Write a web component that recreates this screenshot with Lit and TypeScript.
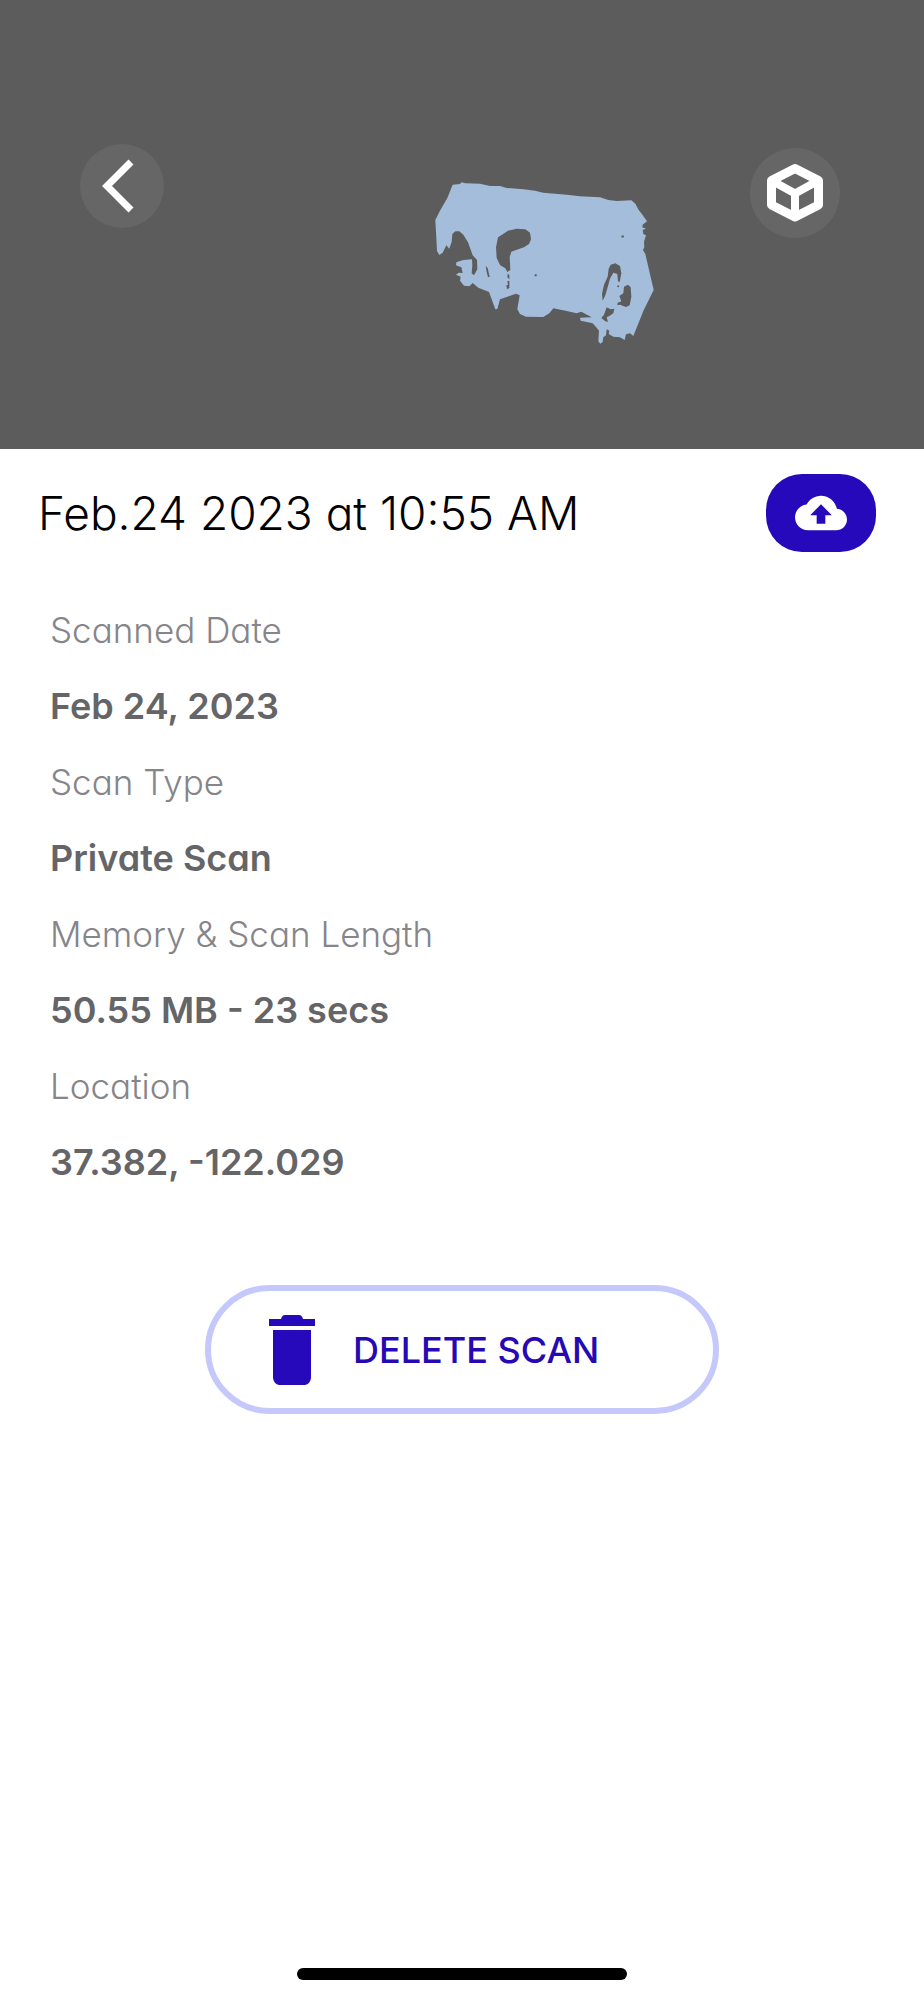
import { LitElement, html, css, svg } from "lit";
import { customElement, property } from "lit/decorators.js";

const mesh = svg`
  <path fill="#a4bddb" fill-rule="evenodd" d="M98 44L120 42L124 37L136 40L180 41L210 48L240 48L260 54L310 58L345 62L370 68L440 74L480 79L540 82L565 90L590 93L634 91L646 101L656 120L664 130L681 154L668 164L667 172L678 176L668 180L670 192L678 196L672 215L673 232L669 240L676 252L701 360L671 421L640 498L630 490L618 493L614 510L600 502L580 500L566 492L568 482L560 478L558 496L550 502L548 516L541 521L535 514L537 482L528 471L518 460L482 452L480 443L515 442L484 425L470 430L440 423L400 415L388 430L370 441L318 440L300 432L292 418L299 376L288 371L262 380L240 388L232 417L226 418L207 366L175 353L158 339L148 349L132 347L120 332L122 320L108 314L116 308L128 309L124 292L108 286L109 277L130 270L156 268L157 285L155 310L162 316L172 298L171 270L158 256L144 217L130 194L118 184H106L97 192L95 215L88 236L79 226L68 248L58 255L51 243L49 205L46 150L60 122L82 84Z
  M234 202L246 194L264 182L290 176L316 178L330 188L333 208L327 222L312 232L288 240L274 245L269 262L271 300L262 306L256 295L240 285L230 264L228 232Z
  M197 288L203 294L209 320L204 322L200 306Z
  M263 312L268 314V328L262 322ZM262 334L268 332V354L261 358L259 346L264 344Z
  M546 372L552 344L563 320L566 296L572 284L586 280L600 288L604 310L599 336L594 334L592 312L580 308L570 326L564 348L556 376L548 392Z
  M612 350L624 344L632 352L634 380L629 406L618 411L600 404L592 406L593 398L604 394L598 378L610 370Z
  M560 412L572 418L583 416L580 430L568 438L560 442L564 456L556 454L544 444L552 434Z
  M604 197L611 196L612 202L605 203ZM344 313H350V319H344ZM592 347L597 346V352L592 351Z"/>`;

@customElement("scan-field")
class ScanField extends LitElement {
  @property() label = "";
  @property() value = "";

  static styles = css`
    :host { display: block; }
    .pair { margin: 0; }
    .label, .value { margin: 0; line-height: 76px; }
    .label { font-size: 35px; font-weight: 300; color: #85858a; }
    .value { font-size: 36px; font-weight: 600; color: #656567; }
  `;

  render() {
    return html`<dl class="pair">
      <dt class="label">${this.label}</dt>
      <dd class="value">${this.value}</dd>
    </dl>`;
  }
}

@customElement("app-root")
class AppRoot extends LitElement {
  fields = [
    ["Scanned Date", "Feb 24, 2023"],
    ["Scan Type", "Private Scan"],
    ["Memory & Scan Length", "50.55 MB - 23 secs"],
    ["Location", "37.382, -122.029"],
  ];

  static styles = css`
    :host {
      display: flex;
      flex-direction: column;
      min-height: 100vh;
      background: #fff;
      font-family: Inter, "Liberation Sans", sans-serif;
      font-feature-settings: "cv11";
    }
    button { font: inherit; border: 0; padding: 0; cursor: pointer; }
    svg { display: block; }
    .viewer { display: grid; background: #5c5c5c; }
    .scene, .toolbar { grid-area: 1 / 1; }
    .scene { width: 100%; height: 449px; }
    .toolbar {
      display: flex;
      justify-content: space-between;
      align-items: flex-start;
      padding: 144px 84px 0 80px;
    }
    .round {
      display: grid;
      place-items: center;
      border-radius: 50%;
      background: #666;
    }
    .back { width: 84px; height: 84px; }
    .cube { width: 90px; height: 90px; margin-top: 4px; }
    .heading {
      display: flex;
      justify-content: space-between;
      align-items: center;
      padding: 25px 48px 0 38px;
    }
    .title { margin: 0; font-size: 46px; font-weight: 300; line-height: 78px; color: #000; }
    .upload {
      display: grid;
      place-items: center;
      width: 110px;
      height: 78px;
      border-radius: 36px;
      background: #2609bb;
    }
    .details { padding: 40px 50px 0; }
    .delete {
      display: flex;
      align-items: center;
      align-self: center;
      gap: 38px;
      box-sizing: border-box;
      width: 514px;
      height: 129px;
      margin-top: 85px;
      padding-left: 58px;
      border: 6px solid #c5c8fb;
      border-radius: 66px;
      background: #fff;
      color: #2609b4;
      font-size: 36px;
      font-weight: 500;
    }
    .home {
      width: 330px;
      height: 12px;
      margin: auto auto 19px;
      border-radius: 6px;
      background: #000;
    }
  `;

  render() {
    return html`
      <header class="viewer">
        <svg class="scene" viewBox="0 0 924 449" role="img" aria-label="Scan preview">
          <svg x="420" y="170" width="250" height="190" viewBox="0 0 750 570">${mesh}</svg>
        </svg>
        <nav class="toolbar">
          <button class="round back" aria-label="Back">
            <svg width="84" height="84" viewBox="0 0 84 84" fill="none" stroke="#fff" stroke-width="7">
              <path d="M51 18L27 42L51 66" />
            </svg>
          </button>
          <button class="round cube" aria-label="3D view">
            <svg width="90" height="90" viewBox="0 0 90 90" fill="none" stroke="#fff" stroke-linejoin="round">
              <path stroke-width="9" d="M45 20.500L68.500 32.500V57L45 69L21.500 57V32.500Z" />
              <path stroke-width="8" d="M21.500 32.500L45 45.500L68.500 32.500M45 45V68" />
            </svg>
          </button>
        </nav>
      </header>
      <div class="heading">
        <h1 class="title">Feb.24 2023 at 10:55 AM</h1>
        <button class="upload" aria-label="Upload scan">
          <svg width="52" height="52" viewBox="0 0 24 24" fill="#fff">
            <path d="M19.350 10.040C18.670 6.590 15.640 4 12 4 9.110 4 6.600 5.640 5.350 8.040 2.340 8.360 0 10.910 0 14c0 3.310 2.690 6 6 6h13c2.760 0 5-2.240 5-5 0-2.640-2.050-4.780-4.650-4.960zM14 13v4h-4v-4H7l5-5 5 5h-3z" />
          </svg>
        </button>
      </div>
      <section class="details">
        ${this.fields.map(
          ([label, value]) => html`<scan-field .label=${label} .value=${value}></scan-field>`
        )}
      </section>
      <button class="delete">
        <svg width="46" height="70" viewBox="0 0 46 70" fill="#2609bb" aria-hidden="true">
          <path d="M0 4H12Q13 0 16 0H30Q33 0 34 4H46V11H0Z" />
          <path d="M4 15H42V63Q41 69 36 70H10Q5 69 4 63Z" />
        </svg>
        <span>DELETE SCAN</span>
      </button>
      <div class="home"></div>
    `;
  }
}
